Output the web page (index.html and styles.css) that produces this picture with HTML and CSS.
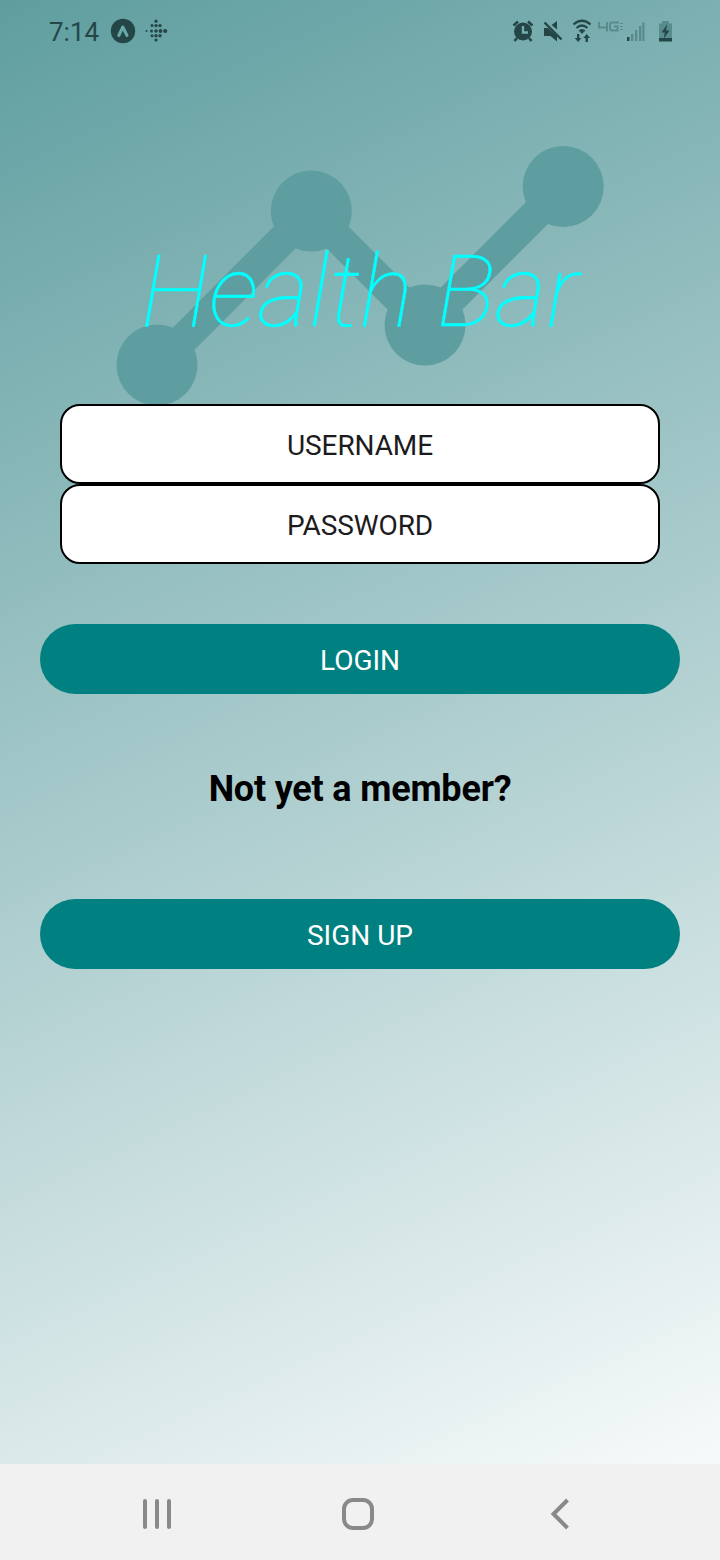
FILE: index.html
```html
<!DOCTYPE html>
<html lang="en">
<head>
<meta charset="utf-8">
<title>Health Bar</title>
<link rel="stylesheet" href="styles.css">
</head>
<body>
<div class="phone">
  <main class="screen">
    <header class="status">
      <div class="status-left">
        <span class="time">7:14</span>
        <svg class="icon-expo" width="26" height="26" viewBox="0 0 26 26"><circle cx="13" cy="13" r="12.2" fill="#244647"/><path d="M8.800 17.500 12.800 9l4.200 8.500" fill="none" stroke="#6aa9a8" stroke-width="3" stroke-linecap="round" stroke-linejoin="round"/></svg>
        <svg width="24" height="24" viewBox="0 0 24 24" fill="#244647"><circle cx="12" cy="2.200" r="1.600"/><circle cx="8" cy="6.600" r="1.500"/><circle cx="12" cy="6.600" r="1.700"/><circle cx="16" cy="6.600" r="1.700"/><circle cx="2.500" cy="12" r="1"/><circle cx="7.500" cy="12" r="1.500"/><circle cx="12" cy="12" r="1.800"/><circle cx="16.500" cy="12" r="1.900"/><circle cx="21.200" cy="12" r="2.100"/><circle cx="8" cy="16.800" r="1.500"/><circle cx="12" cy="16.800" r="1.700"/><circle cx="16" cy="16.800" r="1.700"/><circle cx="12" cy="21" r="1.600"/></svg>
      </div>
      <svg class="status-right" width="176" height="30" viewBox="506 16 176 30" fill="#244647">
        <circle cx="523" cy="31.500" r="9"/>
        <path d="m517 38-2.500 3M529 38l2.500 3M513.500 25.500l4.500-4M532.500 25.500l-4.500-4" stroke="#244647" stroke-width="2.600" fill="none"/>
        <path d="M523 26v6.500h5" stroke="#74aeaf" stroke-width="2.300" fill="none"/>
        <path d="M544 28h4l9 8v5.500l-6.500-5.500h-6.500zM551.500 25l5.500-4v8.500z"/>
        <path d="m544.500 22.500 17 17" stroke="#244647" stroke-width="2.400"/>
        <g fill="none" stroke="#244647" stroke-width="2.200"><path d="M573.500 24.500q8.500-7.500 17 0M576.500 28q5.500-5 11 0M579.300 31.300q2.700-2.500 5.400 0"/></g>
        <circle cx="582" cy="32" r="1.500"/>
        <path d="M577 34h2.300v4h2.200l-3.400 4-3.400-4h2.300zM585.600 42h2.300v-4h2.200l-3.400-4-3.400 4h2.200z"/>
        <g fill="none" stroke="#588b8c" stroke-width="2"><path d="M599 22v5.500h8M607 22v9.500M619 22.500h-7.500q-1.500 0-1.500 2v3.500q0 2.500 2 2.500h5.500v-4H614"/><path d="M620 23.500h3M620 26.500h3M620 29.500h3" stroke-width="1.200"/></g>
        <path d="M627 37h2.500v4H627z"/>
        <path d="M631 34h2.500v7H631zM635 30h2.300v11H635zM639 26h2.300v15H639zM642.300 22.500h2.200V41h-2.200z" fill="#588b8c"/>
        <path d="M662 21h7v2.500h3V38h-13V23.500h3z" fill="#588b8c"/>
        <path d="M659 38h13v3.500h-13zM667 24.500l-5.500 8h3.300l-1 6 5.700-8h-3.300z"/>
      </svg>
    </header>
    <section class="brand">
      <svg class="brand-mark" width="500" height="264" viewBox="110 140 500 264" fill="#5f9ea0">
        <path d="M157 365.500 311 211 425 325 563 187" fill="none" stroke="#5f9ea0" stroke-width="31"/>
        <circle cx="157" cy="365" r="40.500"/><circle cx="311.300" cy="211" r="40.500"/><circle cx="425" cy="325" r="40.500"/><circle cx="563.200" cy="186.500" r="40.500"/>
      </svg>
      <h1 class="title">Health Bar</h1>
    </section>
    <form class="form">
      <input class="field" type="text" placeholder="USERNAME" aria-label="Username">
      <input class="field" type="password" placeholder="PASSWORD" aria-label="Password">
    </form>
    <button class="action">LOGIN</button>
    <p class="prompt">Not yet a member?</p>
    <button class="action">SIGN UP</button>
  </main>
  <nav class="navbar">
    <svg width="30" height="32" viewBox="0 0 30 32" stroke="#898989" stroke-width="4" stroke-linecap="round"><path d="M3 3v26M15 3v26M27 3v26"/></svg>
    <svg class="home" width="34" height="34" viewBox="0 0 34 34" fill="none" stroke="#898989" stroke-width="4"><rect x="3" y="3" width="28" height="28" rx="9"/></svg>
    <svg width="20" height="32" viewBox="0 0 20 32" fill="none" stroke="#898989" stroke-width="4"><path d="M17.500 2 3.500 16l14 14"/></svg>
  </nav>
</div>
</body>
</html>
```
FILE: styles.css
```css
* { box-sizing: border-box; }
body { margin: 0; font-family: Roboto, sans-serif; }
.phone {
  width: 720px;
  height: 1560px;
  display: flex;
  flex-direction: column;
  background: linear-gradient(155.22deg, #5f9ea0, #fff);
}
.screen { height: 1464px; display: flex; flex-direction: column; }
.status {
  height: 62px;
  padding: 0 38px 0 49px;
  display: flex;
  align-items: center;
  justify-content: space-between;
}
.status-left { display: flex; align-items: center; }
.time { font-size: 26px; line-height: 30px; color: #244647; padding-top: 2px; }
.icon-expo { margin: 0 8px 0 11px; }
.status svg { display: block; }
.brand { height: 342px; display: grid; }
.brand-mark { grid-area: 1 / 1; align-self: end; margin-left: 110px; }
.title {
  grid-area: 1 / 1;
  justify-self: center;
  margin: 171px 0 0;
  font-size: 100px;
  line-height: 117px;
  font-weight: 100;
  font-style: italic;
  color: #0ff;
  -webkit-text-stroke: 0.4px #0ff;
  white-space: nowrap;
}
.form { display: flex; flex-direction: column; padding: 0 60px; margin-bottom: 60px; }
.field {
  height: 80px;
  border: 2px solid #000;
  border-radius: 20px;
  background: #fff;
  padding: 2px 0 0;
  text-align: center;
  font: 28px Roboto, sans-serif;
  letter-spacing: -0.1px;
  outline: 0;
}
.field::placeholder { color: #1c1c1e; opacity: 1; }
.action {
  height: 70px;
  margin: 0 40px;
  padding: 3px 0 0;
  border: 0;
  border-radius: 35px;
  background: #008080;
  color: #fff;
  font: 28px Roboto, sans-serif;
}
.prompt {
  margin: 0;
  height: 205px;
  padding-top: 74px;
  text-align: center;
  font-size: 36px;
  font-weight: 700;
  line-height: 42px;
  letter-spacing: -0.2px;
  color: #000;
}
.navbar {
  height: 96px;
  padding: 4px 150px 0 142px;
  display: flex;
  align-items: center;
  justify-content: space-between;
  background: #f1f1f1;
}
.home { margin-right: 6px; }
```
